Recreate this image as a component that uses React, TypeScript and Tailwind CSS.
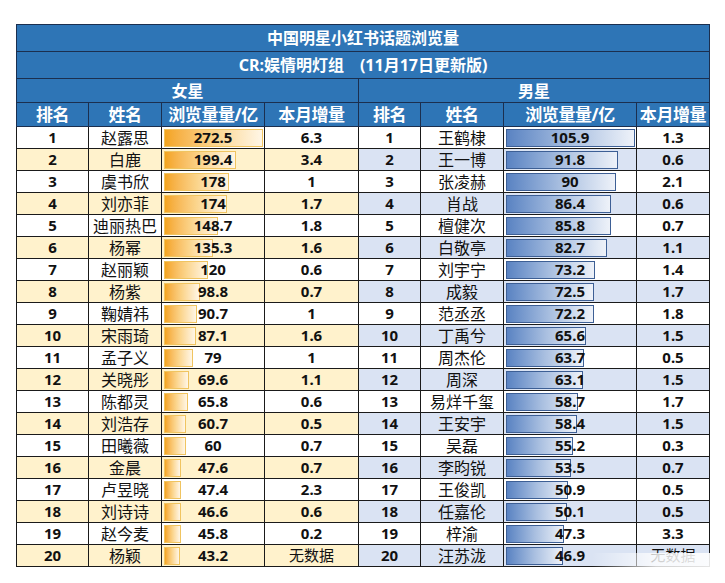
import React from "react";

type Row = [number, string, number, string];

const female: Row[] = [
  [1, "赵露思", 272.5, "6.3"],
  [2, "白鹿", 199.4, "3.4"],
  [3, "虞书欣", 178, "1"],
  [4, "刘亦菲", 174, "1.7"],
  [5, "迪丽热巴", 148.7, "1.8"],
  [6, "杨幂", 135.3, "1.6"],
  [7, "赵丽颖", 120, "0.6"],
  [8, "杨紫", 98.8, "0.7"],
  [9, "鞠婧祎", 90.7, "1"],
  [10, "宋雨琦", 87.1, "1.6"],
  [11, "孟子义", 79, "1"],
  [12, "关晓彤", 69.6, "1.1"],
  [13, "陈都灵", 65.8, "0.6"],
  [14, "刘浩存", 60.7, "0.5"],
  [15, "田曦薇", 60, "0.7"],
  [16, "金晨", 47.6, "0.7"],
  [17, "卢昱晓", 47.4, "2.3"],
  [18, "刘诗诗", 46.6, "0.6"],
  [19, "赵今麦", 45.8, "0.2"],
  [20, "杨颖", 43.2, "无数据"],
];

const male: Row[] = [
  [1, "王鹤棣", 105.9, "1.3"],
  [2, "王一博", 91.8, "0.6"],
  [3, "张凌赫", 90, "2.1"],
  [4, "肖战", 86.4, "0.6"],
  [5, "檀健次", 85.8, "0.7"],
  [6, "白敬亭", 82.7, "1.1"],
  [7, "刘宇宁", 73.2, "1.4"],
  [8, "成毅", 72.5, "1.7"],
  [9, "范丞丞", 72.2, "1.8"],
  [10, "丁禹兮", 65.6, "1.5"],
  [11, "周杰伦", 63.7, "0.5"],
  [12, "周深", 63.1, "1.5"],
  [13, "易烊千玺", 58.7, "1.7"],
  [14, "王安宇", 58.4, "1.5"],
  [15, "吴磊", 55.2, "0.3"],
  [16, "李昀锐", 53.5, "0.7"],
  [17, "王俊凯", 50.9, "0.5"],
  [18, "任嘉伦", 50.1, "0.5"],
  [19, "梓渝", 47.3, "3.3"],
  [20, "汪苏泷", 46.9, "无数据"],
];

const cell = "border border-[#1a1a1a] text-center p-0 leading-none";
const hcell = "border border-[#1b2f4f] text-center p-0 text-white font-bold leading-none";

function Txt({ children, cls }: { children: React.ReactNode; cls: string }) {
  return <div className={"h-[21px] flex items-center justify-center " + cls}>{children}</div>;
}

function Bar({ value, max, maxW, side }: { value: number; max: number; maxW: number; side: "f" | "m" }) {
  const w = Math.max(8, Math.round((value / max) * maxW));
  return (
    <div className="relative h-[21px] w-full">
      <div
        className={
          side === "f"
            ? "absolute left-[2px] top-[2px] h-[18px] border border-[#f0c460] bg-gradient-to-r from-[#f4a41c] via-[#fbd48a] to-[#fff6e6]"
            : "absolute left-[2px] top-[2px] h-[18px] border border-[#3d5f95] bg-gradient-to-r from-[#5a83c2] via-[#a9bfe0] to-[#eef2f9]"
        }
        style={{ width: w }}
      />
      <div className="absolute inset-0 flex items-center justify-center font-bold text-[15px] text-[#111]">
        {value}
      </div>
    </div>
  );
}

export default function App() {
  const font = { fontFamily: '"Noto Sans", "Noto Sans CJK SC", sans-serif' };
  return (
    <div className="w-[725px] h-[583px] bg-white pt-[24px] pl-[16px] relative overflow-hidden" style={font}>
      <table className="border-collapse table-fixed w-[693px]">
        <colgroup>
          <col className="w-[72px]" />
          <col className="w-[73px]" />
          <col className="w-[103px]" />
          <col className="w-[94px]" />
          <col className="w-[62px]" />
          <col className="w-[83px]" />
          <col className="w-[133px]" />
          <col className="w-[73px]" />
        </colgroup>
        <thead>
          <tr className="bg-[#2e75b6]">
            <th colSpan={8} className={hcell + " text-[16px]"}>
              <div className="h-[26px] flex items-center justify-center">中国明星小红书话题浏览量</div>
            </th>
          </tr>
          <tr className="bg-[#2e75b6]">
            <th colSpan={8} className={hcell + " text-[16px]"}>
              <div className="h-[26px] flex items-center justify-center">CR:娱情明灯组　(11月17日更新版)</div>
            </th>
          </tr>
          <tr className="bg-[#2e75b6]">
            <th colSpan={4} className={hcell + " text-[16px]"}>
              <div className="h-[23px] flex items-center justify-center">女星</div>
            </th>
            <th colSpan={4} className={hcell + " text-[16px]"}>
              <div className="h-[23px] flex items-center justify-center">男星</div>
            </th>
          </tr>
          <tr className="bg-[#2e75b6]">
            {["排名", "姓名", "浏览量量/亿", "本月增量", "排名", "姓名", "浏览量量/亿", "本月增量"].map((t, i) => (
              <th key={i} className={hcell + " text-[17px] tracking-tight whitespace-nowrap"}>
                <div className="h-[23px] flex items-center justify-center">{t}</div>
              </th>
            ))}
          </tr>
        </thead>
        <tbody>
          {female.map((f, i) => {
            const m = male[i];
            const even = i % 2 === 1;
            const fbg = even ? "bg-[#fff2cc]" : "bg-white";
            const mbg = even ? "bg-[#dae3f3]" : "bg-white";
            const fInc = f[3] === "无数据" ? "font-normal text-[15px]" : "font-bold text-[15px]";
            const mInc = m[3] === "无数据" ? "font-normal text-[15px]" : "font-bold text-[15px]";
            return (
              <tr key={i} className="text-[#111]">
                <td className={cell + " " + fbg}>
                  <Txt cls="font-bold text-[15px]">{f[0]}</Txt>
                </td>
                <td className={cell + " " + fbg}>
                  <Txt cls="text-[16px]">{f[1]}</Txt>
                </td>
                <td className={cell + " " + fbg}>
                  <Bar value={f[2]} max={272.5} maxW={99} side="f" />
                </td>
                <td className={cell + " " + fbg}>
                  <Txt cls={fInc}>{f[3]}</Txt>
                </td>
                <td className={cell + " " + mbg}>
                  <Txt cls="font-bold text-[15px]">{m[0]}</Txt>
                </td>
                <td className={cell + " " + mbg}>
                  <Txt cls="text-[16px]">{m[1]}</Txt>
                </td>
                <td className={cell + " " + mbg}>
                  <Bar value={m[2]} max={105.9} maxW={129} side="m" />
                </td>
                <td className={cell + " " + mbg}>
                  <Txt cls={mInc}>{m[3]}</Txt>
                </td>
              </tr>
            );
          })}
        </tbody>
      </table>
      <div className="absolute left-[592px] top-[553px] w-[128px] h-[24px] bg-gradient-to-r from-white/0 via-white/80 to-white/90" />
    </div>
  );
}
